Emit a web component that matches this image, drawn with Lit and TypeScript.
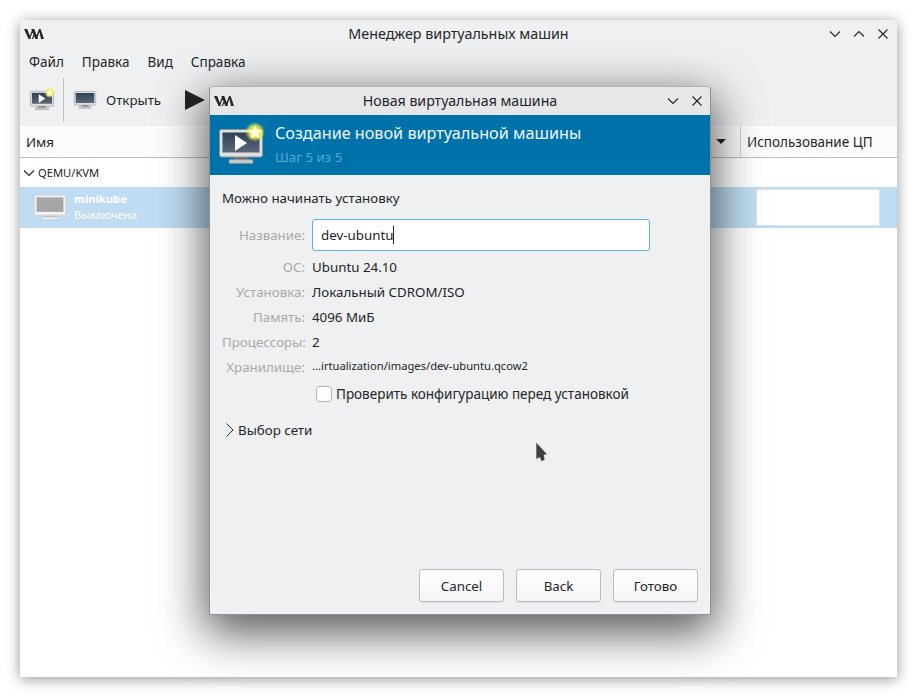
import { LitElement, html, css, svg } from "lit";
import { customElement } from "lit/decorators.js";

const logo = () => html`<svg class="logo" width="20" height="10" viewBox="0 0 20 10"><path d="M0 0h3.200L7 10H4.600zM5 9l3.400-9h1.200L6 10zM7.200 0h3L14 10h-2.600zM11.600 9.400L15 0h1.400L13 10zM14.800 0h1.800L20 10h-3zM7.800 10l2.200-5.600.6 1.200L9 10z" fill="#232629"/></svg>`;

const monitor = (w: number, h: number, play: boolean, star: boolean, gray = false) => html`<svg width=${w} height=${h} viewBox="0 0 44 35" class="mon">
  <defs>
    <linearGradient id="scr" x1="0" y1="0" x2="0" y2="1"><stop offset="0" stop-color="#2f4056"/><stop offset="1" stop-color="#5a687b"/></linearGradient>
    <radialGradient id="glow"><stop offset="0" stop-color="#ffff60" stop-opacity="1"/><stop offset=".6" stop-color="#eef040" stop-opacity=".85"/><stop offset="1" stop-color="#e8e840" stop-opacity="0"/></radialGradient>
  </defs>
  <rect x="15" y="27" width="14" height="4" fill=${gray ? "#c8c8c8" : "#6e7277"}/>
  <rect x="10" y="30.500" width="24" height="4" rx="1" fill=${gray ? "#ececec" : "#c4c5c6"} stroke=${gray ? "#b4b4b4" : "#8a8c8e"} stroke-width=".6"/>
  <rect x=".5" y=".5" width="43" height="27.500" rx="2" fill=${gray ? "#f4f4f4" : "#dedfe0"} stroke=${gray ? "#cfcfcf" : "#8f9193"}/>
  <rect x="3.500" y="3.500" width="37" height="20" fill=${gray ? "#a6a6a6" : "url(#scr)"}/>
  ${play ? svg`<path d="M16 6 L28 14 L16 22z" fill="#fff"/>` : ""}
  ${star ? svg`<circle cx="36" cy="3" r="10" fill="url(#glow)"/><path d="M36-3.500l2.100 4.300 4.700.7-3.400 3.300.8 4.700-4.200-2.200-4.200 2.200.8-4.700-3.400-3.300 4.700-.7z" fill="#fffde0"/>` : ""}
</svg>`;

const chev = (d: string) => html`<svg width="14" height="14" viewBox="0 0 14 14"><path d=${d} fill="none" stroke="#232629" stroke-width="1.1"/></svg>`;
const down = "M2 4.500l5 5 5-5";
const up = "M2 9.500l5-5 5 5";
const close = "M2.500 2.500l9 9M11.500 2.500l-9 9";

@customElement("app-root")
export class AppRoot extends LitElement {
  static styles = css`
    :host { display: block; width: 917px; height: 697px; position: relative; overflow: hidden; background: #fff;
      font-family: "Noto Sans", sans-serif; font-size: 13.33px; color: #232629; }
    svg { overflow: visible; display: block; flex: none; }
    .main { position: absolute; left: 20px; top: 20px; width: 877px; height: 657px; display: flex; flex-direction: column;
      background: #fff; border-radius: 4px 4px 0 0; box-shadow: 0 2px 14px rgba(0,0,0,.42); overflow: hidden; }
    .head { background: #eff0f1; height: 106px; flex: none; display: flex; flex-direction: column; }
    .title { height: 27px; display: grid; grid-template-columns: 1fr auto 1fr; align-items: center; padding: 0 7px; }
    .title .logo { margin-left: -3px; }
    .title .text { font-size: 14.3px; }
    .ctrls { display: flex; gap: 10px; justify-self: end; }
    .menu { height: 28px; box-sizing: border-box; padding: 2px 9px 0; display: flex; align-items: center; gap: 18px; font-size: 13.5px; }
    .tools { flex: 1; display: flex; align-items: center; padding-left: 10px; padding-bottom: 1px; }
    .tools .mon:first-child { margin-top: 1px; }
    .tools .sep { width: 1px; height: 44px; background: #bfc1c3; margin: 0 10px 0 9px; }
    .tools .lbl { margin: 0 24px 0 10px; }
    .arrow { width: 0; height: 0; border-left: 20px solid #232629; border-top: 10px solid transparent; border-bottom: 10px solid transparent; }
    .th { height: 32px; flex: none; display: flex; align-items: center; background: #fcfcfc; border-bottom: 1px solid #bcbebf; box-sizing: border-box; }
    .th .name { padding-left: 6px; flex: 1; }
    .th .tri { width: 0; height: 0; border-left: 5px solid transparent; border-right: 5px solid transparent; border-top: 5px solid #232629; margin-right: 14px; }
    .th .cpu { align-self: stretch; display: flex; align-items: center; width: 157px; box-sizing: border-box; padding-left: 6px; border-left: 1px solid #d0d2d3; font-size: 13.5px; }
    .group { height: 29px; display: flex; align-items: center; gap: 2px; padding-left: 2px; font-size: 11.2px; flex: none; }
    .row { height: 41px; flex: none; background: #bfdcf2; display: flex; align-items: center; padding-left: 14px; color: #fff; }
    .row .info { margin-left: 8px; line-height: 16px; font-size: 11.2px; flex: 1; padding-bottom: 2px; }
    .row b { display: block; font-weight: 700; }
    .row .cell { width: 122px; height: 35px; background: #fff; margin-right: 18px; outline: 1px solid #dbe3e9; }

    .dlg { position: absolute; left: 209px; top: 86px; width: 502px; height: 529px; box-sizing: border-box; display: flex; flex-direction: column;
      background: #eff0f1; border: 1px solid #8f9193; border-top-color: #b0b2b4; border-radius: 4px 4px 0 0; box-shadow: 0 14px 46px 4px rgba(0,0,0,.66); }
    .dtitle { height: 28px; flex: none; display: grid; grid-template-columns: 1fr auto 1fr; align-items: center; padding: 0 6px; background: #e6e7e9; border-radius: 4px 4px 0 0; }
    .dtitle .logo { margin-left: -2px; }
    .dtitle .text { font-size: 14.15px; padding-bottom: 1px; }
    .banner { height: 60px; flex: none; background: #0072aa; display: flex; align-items: center; padding-left: 9px; gap: 12px; }
    .banner .mon { margin-top: 3px; }
    .banner .txt { margin-bottom: 2px; }
    .banner .h { font-size: 16.2px; color: #f0f6fa; line-height: 22px; }
    .banner .s { color: #58a9d6; line-height: 20px; margin-top: 3px; }
    .body { flex: 1; display: flex; flex-direction: column; padding: 14px 12px 12px 12px; }
    .ready { line-height: 18px; }
    .form { display: grid; grid-template-columns: 83px 1fr; grid-template-rows: 35px; column-gap: 7px; margin-top: 12px; align-items: center; grid-auto-rows: 25px; }
    .form .l { text-align: right; color: #a8aaac; white-space: nowrap; }
    .form .l.first { align-self: start; line-height: 32px; }
    .input { align-self: start; height: 32px; width: 338px; box-sizing: border-box; border: 1px solid #5fb1e3; border-radius: 3px; background: #fff; padding-left: 8px; display: flex; align-items: center; }
    .caret { width: 1px; height: 18px; background: #232629; }
    .form .path { font-size: 11.2px; padding-bottom: 2px; }
    .check { display: flex; align-items: center; gap: 4px; margin: 5px 0 0 94px; height: 20px; font-size: 13.5px; }
    .box { width: 14px; height: 14px; border: 1px solid #b4b6b8; border-radius: 3px; background: #fdfdfd; flex: none; }
    .net { display: flex; align-items: center; margin: 16px 0 0 0; height: 20px; }
    .spacer { flex: 1; }
    .btns { display: flex; justify-content: flex-end; gap: 12px; }
    .btn { width: 85px; height: 33px; box-sizing: border-box; border: 1px solid #bcbdbf; border-radius: 3px; background: linear-gradient(#fefefe, #f5f5f6);
      display: flex; align-items: center; justify-content: center; box-shadow: 0 1px 1px rgba(0,0,0,.06); }
    .cursor { position: absolute; left: 535px; top: 441px; }
  `;

  render() {
    return html`
      <div class="main">
        <div class="head">
          <div class="title">${logo()}<div class="text">Менеджер виртуальных машин</div>
            <div class="ctrls">${chev(down)}${chev(up)}${chev(close)}</div></div>
          <div class="menu"><span>Файл</span><span>Правка</span><span>Вид</span><span>Справка</span></div>
          <div class="tools">
            ${monitor(24, 19, true, true)}
            <div class="sep"></div>
            ${monitor(22, 18, false, false)}
            <span class="lbl">Открыть</span>
            <div class="arrow"></div>
          </div>
        </div>
        <div class="th"><span class="name">Имя</span><span class="tri"></span><span class="cpu">Использование ЦП</span></div>
        <div class="group">${chev(down)}<span>QEMU/KVM</span></div>
        <div class="row">
          ${monitor(32, 27, false, false, true)}
          <div class="info"><b>minikube</b>Выключена</div>
          <div class="cell"></div>
        </div>
      </div>
      <div class="dlg">
        <div class="dtitle">${logo()}<div class="text">Новая виртуальная машина</div>
          <div class="ctrls">${chev(down)}${chev(close)}</div></div>
        <div class="banner">
          ${monitor(44, 35, true, true)}
          <div class="txt"><div class="h">Создание новой виртуальной машины</div><div class="s">Шаг 5 из 5</div></div>
        </div>
        <div class="body">
          <div class="ready">Можно начинать установку</div>
          <div class="form">
            <span class="l first">Название:</span><div class="input">dev-ubuntu<span class="caret"></span></div>
            <span class="l">ОС:</span><span>Ubuntu 24.10</span>
            <span class="l">Установка:</span><span>Локальный CDROM/ISO</span>
            <span class="l">Память:</span><span>4096 МиБ</span>
            <span class="l">Процессоры:</span><span>2</span>
            <span class="l">Хранилище:</span><span class="path">...irtualization/images/dev-ubuntu.qcow2</span>
          </div>
          <label class="check"><span class="box"></span><span>Проверить конфигурацию перед установкой</span></label>
          <div class="net"><svg width="16" height="14" viewBox="0 0 16 14"><path d="M4.500 0.500l6.500 6.500-6.500 6.500" fill="none" stroke="#232629" stroke-width="1"/></svg><span>Выбор сети</span></div>
          <div class="spacer"></div>
          <div class="btns"><div class="btn">Cancel</div><div class="btn">Back</div><div class="btn">Готово</div></div>
        </div>
      </div>
      <svg class="cursor" width="14" height="22" viewBox="0 0 14 22"><path d="M1 1L12.500 13.500 9 14 10 19 6.500 20.500 4.500 16.500 1 18.500z" fill="#404040" stroke="#f4f4f4" stroke-width=".6"/></svg>
    `;
  }
}
